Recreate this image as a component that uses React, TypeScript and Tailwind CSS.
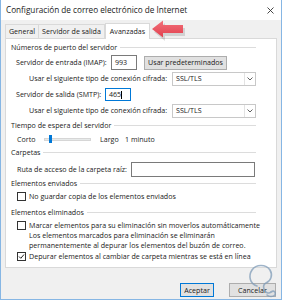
const font = { fontFamily: '"Open Sans", "Noto Sans", Arial, sans-serif' };

function Heading({ label }: { label: string }) {
  return (
    <div className="flex items-center gap-[3px] pl-[5px] pr-[20px] h-full">
      <span className="whitespace-nowrap">{label}</span>
      <div className="flex-1 h-px bg-[#dcdcdc]" />
    </div>
  );
}

function Select() {
  return (
    <div className="w-[84px] h-[14px] border border-[#c8c8c8] bg-white flex items-center justify-between pl-[3px]">
      <span>SSL/TLS</span>
      <div className="w-[11px] h-[12px] border-l border-[#e3e3e3] flex items-center justify-center">
        <svg width="6" height="4" viewBox="0 0 6 4">
          <path d="M0.5 0.5 L3 3 L5.5 0.5" fill="none" stroke="#606060" strokeWidth="1" />
        </svg>
      </div>
    </div>
  );
}

function Check({ checked, label }: { checked?: boolean; label: string }) {
  return (
    <div className="flex items-center pl-[11px] h-full">
      <div className="w-[9px] h-[9px] border border-[#333] bg-white flex items-center justify-center mr-[3px] shrink-0">
        {checked && (
          <svg width="7" height="7" viewBox="0 0 7 7">
            <path d="M1 3.5 L2.8 5.3 L6 1.5" fill="none" stroke="#222" strokeWidth="1" />
          </svg>
        )}
      </div>
      <span className="whitespace-nowrap">{label}</span>
    </div>
  );
}

export default function App() {
  return (
    <div
      className="w-[282px] h-[300px] bg-[#f0f0f0] border-x border-b border-[#86b6e4] flex flex-col text-[7.1px] text-[#1a1a1a] relative overflow-hidden"
      style={font}
    >
      {/* title bar */}
      <div className="h-[20px] bg-white flex items-center justify-between pl-[5px] pr-[7px] shrink-0">
        <span className="text-[8.2px]">Configuración de correo electrónico de Internet</span>
        <svg width="7" height="7" viewBox="0 0 7 7">
          <path d="M0.5 0.5 L6.5 6.5 M6.5 0.5 L0.5 6.5" stroke="#333" strokeWidth="0.9" />
        </svg>
      </div>

      <div className="flex flex-col px-[4px]">
        {/* tabs */}
        <div className="h-[18px] flex items-end relative">
          <div className="w-[34px] h-[14px] flex items-center justify-center border border-b-0 border-[#d9d9d9] bg-[#f0f0f0]">General</div>
          <div className="w-[66px] h-[14px] flex items-center justify-center border border-b-0 border-l-0 border-[#d9d9d9] bg-[#f0f0f0] whitespace-nowrap">Servidor de salida</div>
          <div className="w-[45px] h-[16px] flex items-center justify-center border border-b-0 border-[#d9d9d9] bg-white -mb-px relative z-10">Avanzadas</div>
          <svg className="ml-[1px] -mb-[4px] self-end" width="34" height="22" viewBox="0 0 34 22">
            <defs>
              <linearGradient id="ar" x1="0" y1="0" x2="0" y2="1">
                <stop offset="0" stopColor="#f2707a" />
                <stop offset="1" stopColor="#e2404e" />
              </linearGradient>
            </defs>
            <path d="M2 10 L13 1 L13 6 L33 6 L33 14 L13 14 L13 19 Z" fill="#000" opacity="0.12" transform="translate(1 2)" />
            <path d="M1 9 L12 0.5 L12 5 L32 5 L32 13 L12 13 L12 17.5 Z" fill="url(#ar)" />
          </svg>
        </div>

        {/* panel */}
        <div className="h-[230px] bg-white border border-[#d9d9d9] flex flex-col">
          <div className="h-[16px]"><Heading label="Números de puerto del servidor" /></div>

          <div className="h-[15px] flex items-center pl-[10px]">
            <span className="w-[95px] whitespace-nowrap">Servidor de entrada (IMAP):</span>
            <div className="w-[26px] h-[15px] border border-[#7a7a7a] flex items-center pl-[3px]">993</div>
            <div className="ml-[7px] w-[83px] h-[14px] bg-[#e1e1e1] border border-[#adadad] flex items-center justify-center whitespace-nowrap">
              Usar predeterminados
            </div>
          </div>

          <div className="h-[17px] flex items-center pl-[23px]">
            <span className="w-[143px] whitespace-nowrap">Usar el siguiente tipo de conexión cifrada:</span>
            <Select />
          </div>

          <div className="h-[15px] flex items-center pl-[10px]">
            <span className="w-[89px] whitespace-nowrap">Servidor de salida (SMTP):</span>
            <div className="w-[26px] h-[13px] border border-[#0078d7] flex items-center pl-[3px]">
              465<span className="w-px h-[8px] bg-black" />
            </div>
          </div>

          <div className="h-[17px] flex items-center pl-[23px]">
            <span className="w-[143px] whitespace-nowrap">Usar el siguiente tipo de conexión cifrada:</span>
            <Select />
          </div>

          <div className="h-[13px]"><Heading label="Tiempo de espera del servidor" /></div>

          <div className="h-[14px] flex items-center pl-[11px]">
            <span className="w-[27px]">Corto</span>
            <div className="relative w-[47px] h-[3px] bg-[#e7eaea] border border-[#d6d6d6] mr-[9px]">
              <div className="absolute left-[4px] -top-[4px] w-[3px] h-[8px] bg-[#0078d7]" />
            </div>
            <span className="w-[25px]">Largo</span>
            <span>1 minuto</span>
          </div>

          <div className="h-[13px]"><Heading label="Carpetas" /></div>

          <div className="h-[20px] flex items-center pl-[11px]">
            <span className="w-[114px] whitespace-nowrap">Ruta de acceso de la carpeta raíz:</span>
            <div className="w-[124px] h-[15px] border border-[#7a7a7a]" />
          </div>

          <div className="h-[8px]"><Heading label="Elementos enviados" /></div>
          <div className="h-[18px]"><Check label="No guardar copia de los elementos enviados" /></div>
          <div className="h-[14px]"><Heading label="Elementos eliminados" /></div>
          <div className="h-[12px]"><Check label="Marcar elementos para su eliminación sin moverlos automáticamente" /></div>
          <div className="h-[19px] pl-[23px] flex flex-col justify-center leading-[9.5px]">
            <span>Los elementos marcados para eliminación se eliminarán</span>
            <span>permanentemente al depurar los elementos del buzón de correo.</span>
          </div>
          <div className="h-[12px]"><Check checked label="Depurar elementos al cambiar de carpeta mientras se está en línea" /></div>
        </div>

        {/* buttons */}
        <div className="flex justify-end gap-[15px] pr-[1px] mt-[15px]">
          <div className="w-[34px] h-[14px] bg-[#e1e1e1] border border-[#0078d7] flex items-center justify-center">Aceptar</div>
          <div className="w-[47px] h-[14px] bg-[#e1e1e1] border border-[#adadad] flex items-center justify-center">Cancelar</div>
        </div>
      </div>

      {/* watermark logo */}
      <svg className="absolute right-[2px] bottom-[1px]" width="34" height="36" viewBox="0 0 34 36">
        <g fill="none" stroke="#7f9cb8" strokeWidth="1.6" opacity="0.75" strokeLinecap="round">
          <path d="M12 24 C5 22 3 14 7 8 C11 2 21 2 25 8 C28 13 26 19 21 21 C19 22 18 24 19 27 C20 31 24 32 26 30" />
          <path d="M26 30 C29 28 31 30 30 33 C28 35 24 35 22 33" />
        </g>
      </svg>
    </div>
  );
}
